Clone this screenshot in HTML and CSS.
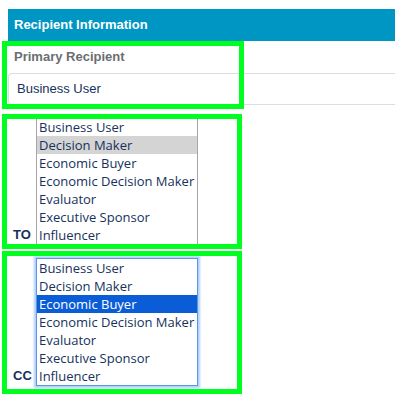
FILE: index.html
```html
<!DOCTYPE html>
<html lang="en">
<head>
  <meta charset="UTF-8" />
  <meta name="viewport" content="width=device-width, initial-scale=1.0" />
  <title>Recipient Information</title>
  <link rel="stylesheet" href="styles.css">
</head>
<body>
  <div id="recipientPanel">
    <div class="panel-header">Recipient Information</div>

    <div class="group">
      <div class="field-label">Primary Recipient</div>
      <div class="field">Business User</div>
      <div class="highlight" id="highlightPrimary"></div>
    </div>

    <div class="group recipient-row" id="toRow">
      <span class="recipient-label">TO</span>
      <div class="listbox">
        <div class="listbox-option">Business User</div>
        <div class="listbox-option selected">Decision Maker</div>
        <div class="listbox-option">Economic Buyer</div>
        <div class="listbox-option">Economic Decision Maker</div>
        <div class="listbox-option">Evaluator</div>
        <div class="listbox-option">Executive Sponsor</div>
        <div class="listbox-option">Influencer</div>
      </div>
      <div class="highlight" id="highlightTo"></div>
    </div>

    <div class="group recipient-row" id="ccRow">
      <span class="recipient-label">CC</span>
      <div class="listbox focused">
        <div class="listbox-option">Business User</div>
        <div class="listbox-option">Decision Maker</div>
        <div class="listbox-option selected">Economic Buyer</div>
        <div class="listbox-option">Economic Decision Maker</div>
        <div class="listbox-option">Evaluator</div>
        <div class="listbox-option">Executive Sponsor</div>
        <div class="listbox-option">Influencer</div>
      </div>
      <div class="highlight" id="highlightCc"></div>
    </div>
  </div>
</body>
</html>
```

FILE: styles.css
```css
html,
body {
  min-height: 100%;
}

body {
  font-family: "Liberation Sans", Arial, sans-serif;
  margin: 0;
  background-color: #ffffff;
}

#recipientPanel {
  padding: 9px 0 12px 8px;
}

.panel-header {
  height: 32px;
  line-height: 32px;
  padding-left: 6px;
  background-color: #0096c4;
  color: #ffffff;
  font-size: 13px;
  font-weight: bold;
}

.group {
  position: relative;
}

.field-label {
  height: 32px;
  line-height: 32px;
  padding-left: 6px;
  color: #6b6d70;
  font-size: 13px;
  font-weight: bold;
}

.field {
  box-sizing: border-box;
  height: 32px;
  line-height: 30px;
  padding-left: 8px;
  border: 1px solid #d8dde6;
  border-right: none;
  border-radius: 4px 0 0 4px;
  color: #16325c;
  font-size: 13px;
}

.recipient-row {
  display: flex;
  align-items: flex-end;
}

#toRow {
  margin-top: 12px;
}

#ccRow {
  margin-top: 13px;
}

.recipient-label {
  width: 23px;
  padding-left: 5px;
  margin-bottom: 1px;
  line-height: 18px;
  color: #16325c;
  font-size: 13px;
  font-weight: bold;
}

.listbox {
  box-sizing: border-box;
  width: 162px;
  height: 128px;
  border: 1px solid #a6a6a6;
  background-color: #ffffff;
  font-family: "Open Sans", "Noto Sans", sans-serif;
  font-size: 13px;
  color: #16325c;
}

.listbox.focused {
  border-color: #5a97e3;
  box-shadow: 0 0 2px 2px rgba(120, 172, 245, 0.6);
}

.listbox-option {
  height: 18px;
  line-height: 18px;
  padding-left: 2px;
  white-space: nowrap;
}

.listbox-option.selected {
  background-color: #d4d4d4;
}

.focused .listbox-option.selected {
  background-color: #0b5dd7;
  color: #ffffff;
}

/* green annotation frames drawn over each block */
.highlight {
  position: absolute;
  box-sizing: border-box;
  border: 5px solid #00ff21;
  pointer-events: none;
}

#highlightPrimary {
  top: 0;
  left: -6px;
  width: 242px;
  height: 68px;
}

#highlightTo {
  top: -3px;
  left: -6px;
  width: 240px;
  height: 135px;
}

#highlightCc {
  top: -7px;
  left: -6px;
  width: 240px;
  height: 143px;
}
```
